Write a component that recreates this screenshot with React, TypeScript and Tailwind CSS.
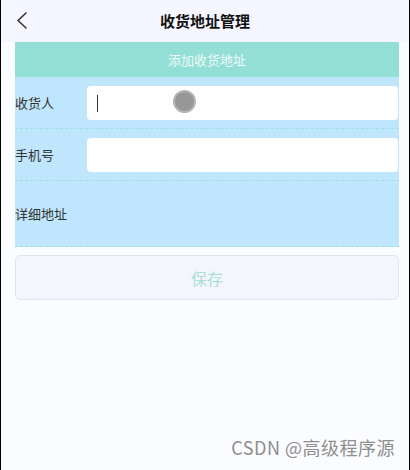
const fontStack = "[font-family:'Noto_Sans_CJK_SC','Noto_Sans',sans-serif]";

function BackIcon() {
  return (
    <svg width="14" height="18" viewBox="0 0 14 18" fill="none">
      <path d="M11 2L3 9.5L11 17" stroke="#333" strokeWidth="1.6" strokeLinecap="round" strokeLinejoin="round" />
    </svg>
  );
}

function FieldRow({ label, withInput, showCursor }: { label: string; withInput: boolean; showCursor?: boolean }) {
  return (
    <div className="flex h-[52px] items-center border-b border-dashed border-[#9edfe0]">
      <span className="w-[72px] shrink-0 text-[13px] text-[#333]">{label}</span>
      {withInput && (
        <div className="mr-[1px] mt-[1px] flex h-[34px] flex-1 items-center rounded-[4px] bg-white px-[10px]">
          {showCursor && <span className="h-[17px] w-[1px] bg-[#333]" />}
        </div>
      )}
    </div>
  );
}

export default function App() {
  return (
    <div className={`relative h-[470px] w-[410px] overflow-hidden border-x border-black bg-[#fbfcff] ${fontStack}`}>
      <header className="relative flex h-[42px] items-center justify-center bg-[#f5f6ff]">
        <span className="absolute left-[14px] top-[11px]">
          <BackIcon />
        </span>
        <h1 className="text-[15px] font-bold text-[#111]">收货地址管理</h1>
      </header>

      <div className="ml-[14px] mr-[10px]">
        <div className="flex h-[35px] items-center justify-center bg-[#93dfd5] text-[13px] text-[#eefaf8]">
          添加收货地址
        </div>
        <div className="bg-[#bfe6fc]">
          <FieldRow label="收货人" withInput showCursor />
          <FieldRow label="手机号" withInput />
          <div className="flex h-[66px] items-center border-b border-dashed border-[#9edfe0]">
            <span className="text-[13px] text-[#333]">详细地址</span>
          </div>
        </div>
        <button
          type="button"
          className="mt-[8px] flex h-[45px] w-full items-center justify-center rounded-[5px] border border-[#e4e4ee] bg-[#f5f5fd] text-[16px] text-[#a6e0d6]"
        >
          保存
        </button>
      </div>

      <span className="absolute left-[172px] top-[90px] h-[23px] w-[23px] rounded-full border-2 border-[#b5b5b5] bg-[#979797]" />

      <span className="absolute bottom-[9px] right-[14px] text-[18px] tracking-[0.5px] text-[#8e8e8e]">CSDN @高级程序源</span>
    </div>
  );
}
